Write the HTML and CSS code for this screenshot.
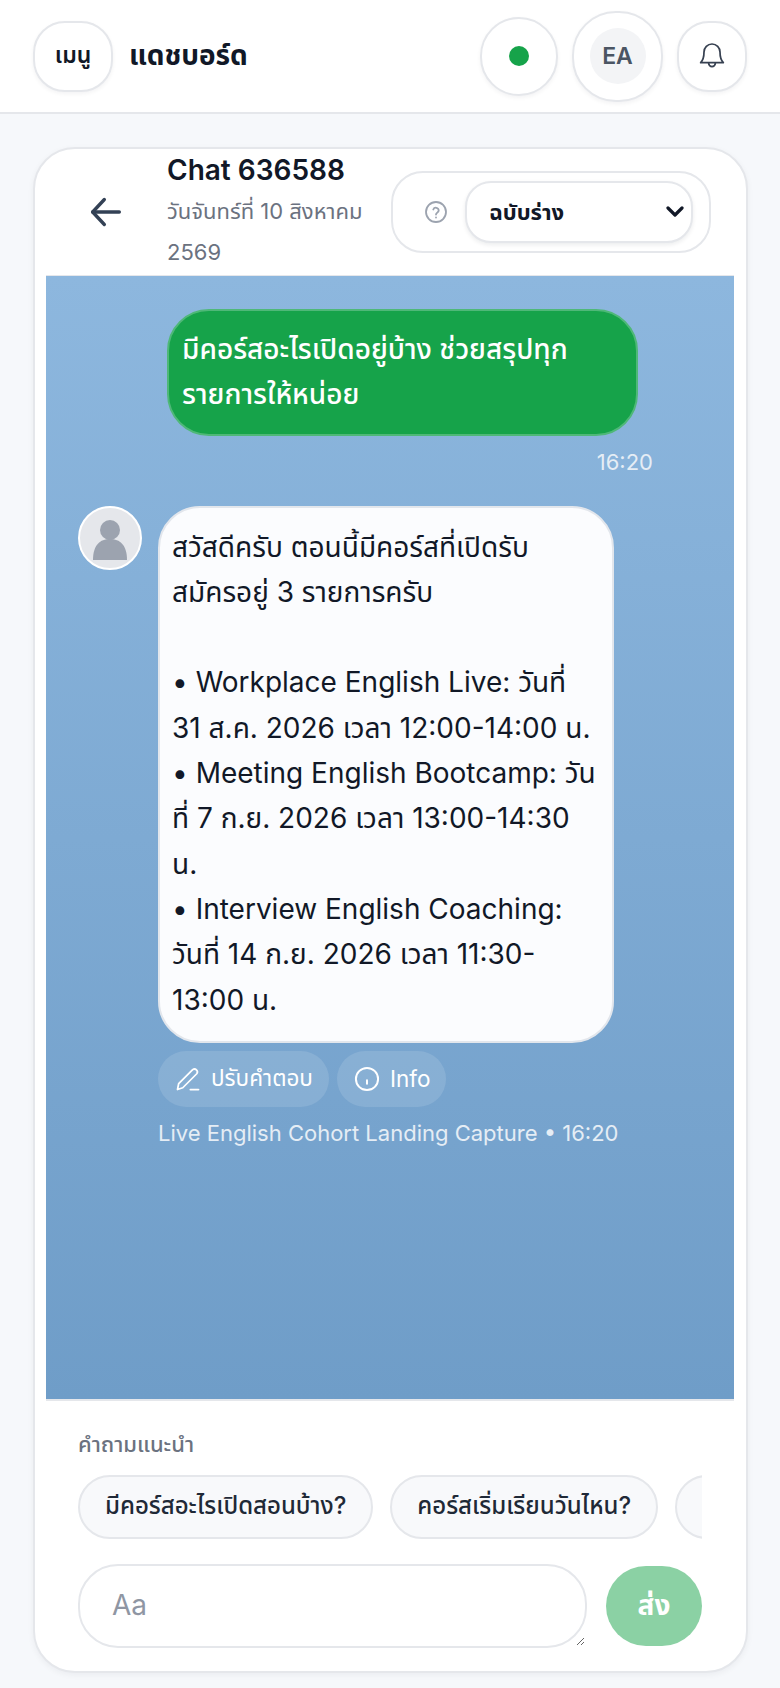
FILE: index.html
```
<!DOCTYPE html>
<html lang="th">
<head>
    <title>Chat 636588</title>
    <link rel="stylesheet" href="styles.css">
</head>
<body>
    <header class="topbar">
        <button class="menu-btn" type="button">เมนู</button>
        <div class="page-title">แดชบอร์ด</div>
        <div class="topbar-actions">
            <button class="status-btn" type="button"><span class="status-dot"></span></button>
            <button class="user-btn" type="button"><span class="user-initials">EA</span></button>
            <button class="bell-btn" type="button">
                <svg width="32" height="32" viewBox="0 0 24 24" fill="none" stroke="#374151" stroke-width="1.300" stroke-linecap="round" stroke-linejoin="round">
                    <path d="M6 9a6 6 0 0 1 12 0c0 4.5 1 6.500 2.500 8H3.500C5 15.500 6 13.500 6 9z"/>
                    <path d="M9.500 17.500a2.500 2.500 0 0 0 5 0"/>
                </svg>
            </button>
        </div>
    </header>

    <main class="chat-card">
        <div class="chat-header">
            <button class="back-btn" type="button">
                <svg width="40" height="40" viewBox="0 0 24 24" fill="none" stroke="#334155" stroke-width="2" stroke-linecap="round" stroke-linejoin="round">
                    <path d="M20 12H4"/>
                    <path d="M11 4.500L4 12l7 7.500"/>
                </svg>
            </button>
            <div class="chat-info">
                <div class="chat-title">Chat 636588</div>
                <div class="chat-date">วันจันทร์ที่ 10 สิงหาคม 2569</div>
            </div>
            <div class="state-box">
                <svg width="24" height="24" viewBox="0 0 24 24" fill="none" stroke="#9ca3af" stroke-width="1.8" stroke-linecap="round" stroke-linejoin="round">
                    <circle cx="12" cy="12" r="10"/>
                    <path d="M9.300 9.500a2.800 2.800 0 0 1 5.400 1c0 1.800-2.700 2.400-2.700 4"/>
                    <path d="M12 17.500h.01"/>
                </svg>
                <select class="state-select">
                    <option>ฉบับร่าง</option>
                </select>
            </div>
        </div>

        <section class="messages">
            <div class="msg-out">
                <div class="bubble-out">มีคอร์สอะไรเปิดอยู่บ้าง ช่วยสรุปทุกรายการให้หน่อย</div>
                <div class="time-out">16:20</div>
            </div>
            <div class="msg-in">
                <div class="avatar">
                    <svg width="60" height="60" viewBox="0 0 60 60" fill="#9ca3af">
                        <circle cx="30" cy="22" r="10"/>
                        <path d="M13 52c0-15 7-21 17-21s17 6 17 21z"/>
                    </svg>
                </div>
                <div class="msg-body">
                    <div class="bubble-in">สวัสดีครับ ตอนนี้มีคอร์สที่เปิดรับ
สมัครอยู่ 3 รายการครับ

• Workplace English Live: วันที่ 31 ส.ค. 2026 เวลา 12:00-14:00 น.
• Meeting English Bootcamp: วันที่ 7 ก.ย. 2026 เวลา 13:00-14:30 น.
• Interview English Coaching: วันที่ 14 ก.ย. 2026 เวลา 11:30-13:00 น.</div>
                    <div class="msg-actions">
                        <button class="action-btn" type="button">
                            <svg width="28" height="28" viewBox="0 0 24 24" fill="none" stroke="#fff" stroke-width="1.5" stroke-linecap="round" stroke-linejoin="round">
                                <path d="M3 21l1-5L16 4a2.500 2.500 0 0 1 3.500 3.500L7.500 19.500z"/>
                                <path d="M14 21h7"/>
                            </svg>
                            ปรับคำตอบ
                        </button>
                        <button class="action-btn" type="button">
                            <svg width="28" height="28" viewBox="0 0 24 24" fill="none" stroke="#fff" stroke-width="1.7" stroke-linecap="round">
                                <circle cx="12" cy="12" r="9.500"/>
                                <path d="M12 13v3"/>
                            </svg>
                            Info
                        </button>
                    </div>
                    <div class="msg-meta">Live English Cohort Landing Capture • 16:20</div>
                </div>
            </div>
        </section>

        <section class="composer">
            <div class="suggest-label">คำถามแนะนำ</div>
            <div class="suggest-row">
                <button class="chip" type="button">มีคอร์สอะไรเปิดสอนบ้าง?</button>
                <button class="chip" type="button">คอร์สเริ่มเรียนวันไหน?</button>
                <button class="chip" type="button">ค่าเรียนเท่าไหร่?</button>
            </div>
            <div class="input-row">
                <textarea class="msg-input" placeholder="Aa"></textarea>
                <button class="send-btn" type="button">ส่ง</button>
            </div>
        </section>
    </main>
</body>
</html>
```

FILE: styles.css
```
* {
    box-sizing: border-box;
}

body {
    margin: 0;
    height: 1688px;
    overflow: hidden;
    font-family: Inter, "Noto Sans Thai", "Noto Sans", sans-serif;
    color: #111827;
    background-color: #f6f8fb;
    background-image: radial-gradient(#eceff4 0.6px, transparent 0.6px);
    background-size: 4px 4px;
}

button {
    font-family: inherit;
    cursor: pointer;
}

/* top bar */
.topbar {
    height: 114px;
    display: flex;
    align-items: center;
    padding: 0 33px;
    background: #ffffff;
    border-bottom: 2px solid #e5e7eb;
}

.menu-btn,
.status-btn,
.user-btn,
.bell-btn {
    display: flex;
    align-items: center;
    justify-content: center;
    background: #ffffff;
    border: 2px solid #e5e7eb;
    border-radius: 32px;
    box-shadow: 0 2px 4px rgba(15, 23, 42, 0.05);
    padding: 0;
}

.menu-btn {
    width: 80px;
    height: 71px;
    font-size: 23px;
    font-weight: 600;
    color: #111827;
}

.page-title {
    margin-left: 16px;
    font-size: 28px;
    font-weight: 700;
}

.topbar-actions {
    margin-left: auto;
    display: flex;
    align-items: center;
    gap: 14px;
}

.status-btn {
    width: 78px;
    height: 79px;
    border-radius: 40px;
}

.status-dot {
    width: 20px;
    height: 20px;
    border-radius: 50%;
    background: #16a34a;
}

.user-btn {
    width: 91px;
    height: 91px;
    border-radius: 44px;
}

.user-initials {
    width: 56px;
    height: 56px;
    border-radius: 50%;
    background: #f3f4f6;
    color: #4b5563;
    font-size: 23px;
    font-weight: 600;
    line-height: 56px;
}

.bell-btn {
    width: 70px;
    height: 71px;
}

/* chat card */
.chat-card {
    width: 715px;
    height: 1526px;
    margin: 33px 0 0 33px;
    display: flex;
    flex-direction: column;
    padding: 0 12px 0 11px;
    background: #ffffff;
    border: 2px solid #e5e7eb;
    border-radius: 42px;
    box-shadow: 0 2px 6px rgba(15, 23, 42, 0.05);
}

.chat-header {
    height: 126px;
    flex-shrink: 0;
    display: flex;
    align-items: center;
    padding-left: 40px;
}

.back-btn {
    width: 40px;
    height: 40px;
    padding: 0;
    border: none;
    background: none;
}

.chat-info {
    width: 208px;
    margin: -2px 0 0 41px;
}

.chat-title {
    font-size: 28px;
    font-weight: 600;
    line-height: 42px;
}

.chat-date {
    font-size: 22px;
    line-height: 41px;
    color: #6b7280;
}

.state-box {
    width: 320px;
    height: 82px;
    margin-left: 16px;
    display: flex;
    align-items: center;
    gap: 17px;
    padding: 0 16px 0 31px;
    border: 2px solid #e5e7eb;
    border-radius: 32px;
}

.state-select {
    flex: 1;
    height: 62px;
    padding: 0 30px 0 22px;
    appearance: none;
    font-family: inherit;
    font-size: 22px;
    font-weight: 700;
    color: #111827;
    background-color: #ffffff;
    background-image: url("data:image/svg+xml,%3Csvg xmlns='http://www.w3.org/2000/svg' viewBox='0 0 18 12'%3E%3Cpath d='M2 2l7 7 7-7' fill='none' stroke='%23111827' stroke-width='3.200' stroke-linecap='round' stroke-linejoin='round'/%3E%3C/svg%3E");
    background-repeat: no-repeat;
    background-position: right 7px center;
    background-size: 18px 12px;
    border: 2px solid #e5e7eb;
    border-radius: 26px;
    box-shadow: 0 2px 4px rgba(15, 23, 42, 0.08);
}

/* messages */
.messages {
    height: 1126px;
    flex-shrink: 0;
    padding: 33px 30px 0 32px;
    background: linear-gradient(180deg, #8db7de 0%, #6f9dc8 100%);
    border-top: 1px solid #e5e7eb;
    border-bottom: 2px solid #e5e7eb;
}

.msg-out {
    margin-left: 89px;
    width: 486px;
}

.bubble-out {
    width: 471px;
    padding: 16px 13px;
    font-size: 28px;
    font-weight: 500;
    line-height: 45.300px;
    color: #ffffff;
    background: #16a34a;
    border: 2px solid #4fb878;
    border-radius: 42px;
}

.time-out {
    margin-top: 12px;
    text-align: right;
    font-size: 22px;
    line-height: 28px;
    color: #e5edf5;
}

.msg-in {
    display: flex;
    gap: 16px;
    margin-top: 30px;
}

.avatar {
    width: 64px;
    height: 64px;
    flex-shrink: 0;
    overflow: hidden;
    background: #e5e7eb;
    border: 2px solid #ffffff;
    border-radius: 50%;
}

.msg-body {
    width: 456px;
}

.bubble-in {
    padding: 17px 12px 18px;
    font-size: 28px;
    line-height: 45.300px;
    white-space: pre-line;
    color: #111827;
    background: #fbfcfe;
    border: 2px solid #e2e6ec;
    border-radius: 42px;
}

.msg-actions {
    display: flex;
    gap: 8px;
    margin-top: 8px;
}

.action-btn {
    display: flex;
    align-items: center;
    gap: 9px;
    height: 56px;
    padding: 0 16px;
    font-size: 22.500px;
    color: #ffffff;
    background: rgba(255, 255, 255, 0.12);
    border: none;
    border-radius: 28px;
}

.msg-meta {
    margin-top: 12px;
    width: 480px;
    font-size: 22px;
    line-height: 28px;
    white-space: nowrap;
    color: #e5edf5;
}

/* composer */
.composer {
    flex: 1;
    padding: 30px 32px 0;
}

.suggest-label {
    font-size: 22px;
    line-height: 26px;
    font-weight: 500;
    color: #6b7280;
}

.suggest-row {
    display: flex;
    gap: 17px;
    margin-top: 18px;
    overflow: hidden;
}

.chip {
    flex-shrink: 0;
    height: 64px;
    padding: 0 25px;
    font-size: 24px;
    font-weight: 500;
    color: #1f2937;
    background: #f8f9fb;
    border: 2px solid #e5e7eb;
    border-radius: 32px;
}

.input-row {
    display: flex;
    align-items: center;
    gap: 19px;
    margin-top: 25px;
}

.msg-input {
    flex: 1;
    height: 84px;
    padding: 22px 32px;
    font-family: inherit;
    font-size: 28px;
    color: #111827;
    background: #ffffff;
    border: 2px solid #e5e7eb;
    border-radius: 40px;
}

.msg-input::placeholder {
    color: #8f96a3;
}

.send-btn {
    width: 96px;
    height: 80px;
    font-size: 28px;
    font-weight: 700;
    color: #ffffff;
    background: #8bd1a4;
    border: none;
    border-radius: 40px;
}
```
